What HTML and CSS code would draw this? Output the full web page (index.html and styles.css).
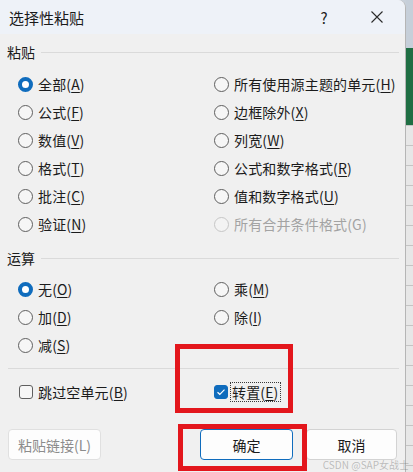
FILE: index.html
```html
<!DOCTYPE html>
<html lang="zh-CN">
<head>
<meta charset="utf-8">
<title>选择性粘贴</title>
<link rel="stylesheet" href="styles.css">
</head>
<body>
<div class="screen">
  <div class="dialog">
    <div class="titlebar">
      <span class="title">选择性粘贴</span>
      <span class="help">?</span>
      <span class="close"><svg width="12" height="12" viewBox="0 0 12 12"><path d="M0.5 0.5L11.5 11.5M11.5 0.5L0.5 11.5" stroke="#2b2b2b" stroke-width="1.1" fill="none"/></svg></span>
    </div>
    <div class="body">
      <div class="group-head"><span>粘贴</span><i class="rule"></i></div>
      <div class="grid paste">
        <div class="opt"><span class="radio on"></span>全部(<u>A</u>)</div>
        <div class="opt"><span class="radio"></span>所有使用源主题的单元(<u>H</u>)</div>
        <div class="opt"><span class="radio"></span>公式(<u>F</u>)</div>
        <div class="opt"><span class="radio"></span>边框除外(<u>X</u>)</div>
        <div class="opt"><span class="radio"></span>数值(<u>V</u>)</div>
        <div class="opt"><span class="radio"></span>列宽(<u>W</u>)</div>
        <div class="opt"><span class="radio"></span>格式(<u>T</u>)</div>
        <div class="opt"><span class="radio"></span>公式和数字格式(<u>R</u>)</div>
        <div class="opt"><span class="radio"></span>批注(<u>C</u>)</div>
        <div class="opt"><span class="radio"></span>值和数字格式(<u>U</u>)</div>
        <div class="opt"><span class="radio"></span>验证(<u>N</u>)</div>
        <div class="opt disabled"><span class="radio"></span>所有合并条件格式(G)</div>
      </div>
      <div class="group-head ops-head"><span>运算</span><i class="rule"></i></div>
      <div class="grid ops">
        <div class="opt"><span class="radio on"></span>无(<u>O</u>)</div>
        <div class="opt"><span class="radio"></span>乘(<u>M</u>)</div>
        <div class="opt"><span class="radio"></span>加(<u>D</u>)</div>
        <div class="opt"><span class="radio"></span>除(<u>I</u>)</div>
        <div class="opt"><span class="radio"></span>减(<u>S</u>)</div>
      </div>
      <div class="sep"></div>
      <div class="grid checks">
        <div class="opt"><span class="box"></span>跳过空单元(<u>B</u>)</div>
        <div class="opt"><span class="box on"><svg width="10" height="8" viewBox="0 0 10 8"><path d="M1.5 4.2L3.8 6.3L8.5 1.6" stroke="#fff" stroke-width="1.2" fill="none"/></svg></span><span class="focus">转置(<u>E</u>)</span></div>
      </div>
      <div class="buttons">
        <span class="btn disabled">粘贴链接(L)</span>
        <span class="btn primary">确定</span>
        <span class="btn cancel">取消</span>
      </div>
    </div>
  </div>
  <div class="excel">
    <div class="xl-top"></div>
    <div class="xl-green"></div>
    <div class="xl-grid"></div>
  </div>
  <div class="mark mark-a"></div>
  <div class="mark mark-b"></div>
  <div class="watermark">CSDN @SAP女战士</div>
</div>
</body>
</html>
```

FILE: styles.css
```css
* { box-sizing: border-box; }
html, body { margin: 0; padding: 0; }
body {
  font-family: "Noto Sans CJK SC", "Noto Sans", sans-serif;
  font-size: 14px;
  color: #1b1b1b;
}
.screen {
  position: relative;
  width: 413px;
  height: 472px;
  display: flex;
  overflow: hidden;
  background: #c9d1da;
}
.dialog {
  width: 406px;
  height: 472px;
  display: flex;
  flex-direction: column;
  background: #f0f0f0;
  border-top-right-radius: 8px;
  overflow: hidden;
  border-right: 1px solid #b5b5b5;
}
.titlebar {
  height: 34px;
  flex: none;
  display: flex;
  align-items: center;
  background: #eef2f8;
  padding-left: 9px;
}
.title { font-size: 15px; color: #1a1a1a; flex: 1; }
.help { font-size: 15px; width: 14px; text-align: center; margin-right: 40px; color: #222; }
.close { width: 12px; height: 12px; margin-right: 22px; display: flex; }
.body { flex: 1; padding: 0 6px 0 7px; display: flex; flex-direction: column; }
.group-head {
  height: 18px;
  margin-top: 9px;
  display: flex;
  align-items: center;
  line-height: 18px;
}
.group-head .rule { flex: 1; height: 1px; background: #dadada; margin-left: 6px; }
.ops-head { margin-top: 11px; }
.grid {
  display: grid;
  grid-template-columns: 196px 1fr;
  margin-left: 11px;
}
.paste { margin-top: 9px; }
.ops { margin-top: 8px; }
.opt {
  height: 28px;
  display: flex;
  align-items: center;
  white-space: nowrap;
  letter-spacing: 0.15px;
}
.opt u { text-underline-offset: 2px; text-decoration-thickness: 1px; }
.radio {
  width: 15px;
  height: 15px;
  border-radius: 50%;
  border: 1px solid #5f5f5f;
  background: #f6f6f6;
  margin-right: 5px;
  flex: none;
}
.radio.on {
  border: 4.5px solid #0f6cbd;
  background: #fff;
}
.opt.disabled { color: #a3a3a3; }
.opt.disabled .radio { border-color: #c6c6c6; background: #f3f3f3; }
.sep { height: 1px; background: #dadada; margin-top: 9px; margin-left: 1px; }
.checks { margin-top: 11px; margin-left: 12px; grid-template-columns: 195px 1fr; }
.checks .opt { height: 24px; }
.box {
  width: 14px;
  height: 14px;
  border: 1px solid #5f5f5f;
  border-radius: 3px;
  background: #f6f6f6;
  margin-right: 5px;
  flex: none;
  display: flex;
  align-items: center;
  justify-content: center;
}
.box.on { background: #0f6cbd; border-color: #0f6cbd; }
.focus {
  border: 1px dotted #3a3a3a;
  padding: 0 2px 0 1px;
  margin-left: -3px;
  line-height: 18px;
}
.buttons {
  display: flex;
  margin-top: 25px;
  margin-left: 1px;
}
.btn {
  height: 31px;
  display: flex;
  align-items: center;
  justify-content: center;
  background: #fdfdfd;
  border: 1px solid #d3d3d3;
  border-radius: 4px;
  color: #1b1b1b;
}
.btn.disabled { width: 93px; color: #8c8c8c; border-color: #e0e0e0; }
.btn.primary { width: 93px; margin-left: 99px; border: 1.5px solid #0f6cbd; }
.btn.cancel { width: 91px; margin-left: 13px; }
.excel { flex: 1; display: flex; flex-direction: column; }
.xl-top { height: 48px; background: #c6cfd9; }
.xl-green { height: 77px; background: #1f6e43; }
.xl-grid {
  flex: 1;
  background: repeating-linear-gradient(to bottom, #c4c4c4 0 1px, #e7e7e7 1px 20px);
}
.mark {
  position: absolute;
  border: 5px solid #e3161c;
}
.mark-a { left: 175px; top: 344px; width: 118px; height: 69px; }
.mark-b { left: 178px; top: 424px; width: 129px; height: 47px; }
.watermark {
  position: absolute;
  right: 4px;
  bottom: 1px;
  font-size: 10px;
  line-height: 12px;
  color: rgba(120, 120, 120, 0.45);
  font-family: "Noto Sans CJK SC", "Noto Sans", sans-serif;
}
```
